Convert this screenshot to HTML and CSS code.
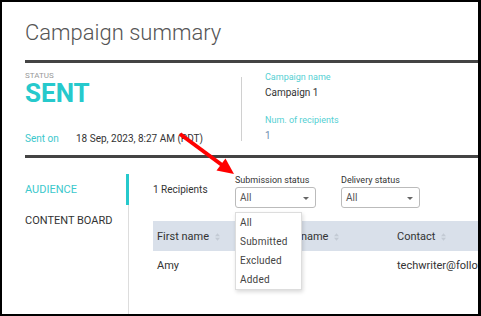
FILE: index.html
```html
<!DOCTYPE html>
<html lang="en">
<head>
  <meta charset="UTF-8" />
  <title>Campaign summary</title>
  <link rel="stylesheet" href="styles.css">
</head>
<body>
  <div class="frame">
    <h1 class="title">Campaign summary</h1>

    <div class="summary">
      <div class="status-col">
        <div class="tiny-label">STATUS</div>
        <div class="status">SENT</div>
        <div class="sent-on"><span class="sent-label">Sent on</span>18 Sep, 2023, 8:27 AM (PDT)</div>
      </div>
      <div class="divider"></div>
      <div class="info-col">
        <div class="info-label">Campaign name</div>
        <div class="info-value">Campaign 1</div>
        <div class="info-label gap">Num. of recipients</div>
        <div class="info-value num">1</div>
      </div>
    </div>

    <div class="body">
      <div class="nav">
        <a class="nav-item active">AUDIENCE</a>
        <a class="nav-item">CONTENT BOARD</a>
      </div>

      <div class="main">
        <div class="toolbar">
          <div class="count">1 Recipients</div>
          <div class="filter">
            <div class="filter-label">Submission status</div>
            <div class="select sub"><span>All</span><i class="caret"></i></div>
            <ul class="menu">
              <li>All</li>
              <li>Submitted</li>
              <li>Excluded</li>
              <li>Added</li>
            </ul>
          </div>
          <div class="filter">
            <div class="filter-label">Delivery status</div>
            <div class="select del"><span>All</span><i class="caret"></i></div>
          </div>
        </div>

        <table class="grid">
          <thead>
            <tr>
              <th class="c1">First name <svg class="sort" viewBox="0 0 6 9"><path d="M3 0L6 3.5H0Z M3 9L6 5.5H0Z"/></svg></th>
              <th class="c2">Last name <svg class="sort" viewBox="0 0 6 9"><path d="M3 0L6 3.5H0Z M3 9L6 5.5H0Z"/></svg></th>
              <th class="c3">Contact <svg class="sort" viewBox="0 0 6 9"><path d="M3 0L6 3.5H0Z M3 9L6 5.5H0Z"/></svg></th>
            </tr>
          </thead>
          <tbody>
            <tr>
              <td>Amy</td>
              <td></td>
              <td>techwriter@followup.com</td>
            </tr>
          </tbody>
        </table>
      </div>
    </div>

    <!-- callout arrow -->
    <svg class="arrow" width="481" height="316" viewBox="0 0 481 316">
      <line x1="180" y1="134" x2="222" y2="165" stroke="#f00" stroke-width="4"/>
      <polygon points="234,174 216.5,170.5 225.5,158.5" fill="#f00"/>
    </svg>
  </div>
</body>
</html>
```

FILE: styles.css
```css
* {
  box-sizing: border-box;
}
body {
  margin: 0;
  font-family: Roboto, "Liberation Sans", sans-serif;
  color: #333;
  background: #fff;
}
.frame {
  position: relative;
  width: 481px;
  height: 316px;
  border: 2px solid #000;
  border-right-width: 3px;
  padding-left: 23px;
  overflow: hidden;
}
.title {
  margin: 0 0 13px;
  padding-top: 17px;
  font-size: 22px;
  line-height: 28px;
  font-weight: 300;
  color: #555;
  white-space: nowrap;
}
.summary {
  display: flex;
  height: 98px;
  border-top: 3px solid #444;
  border-bottom: 3px solid #444;
}
.status-col {
  width: 216px;
  flex-shrink: 0;
  padding-top: 8px;
}
.tiny-label {
  font-size: 8px;
  line-height: 9px;
  color: #999;
}
.status {
  font-size: 26px;
  line-height: 26px;
  font-weight: 700;
  color: #26c9cc;
}
.sent-on {
  margin-top: 26px;
  font-size: 10px;
  line-height: 14px;
  white-space: nowrap;
}
.sent-label {
  display: inline-block;
  width: 51px;
  color: #3cc8cc;
}
.divider {
  width: 1px;
  height: 64px;
  margin-top: 14px;
  background: #d0d0d0;
}
.info-col {
  padding: 7px 0 0 23px;
}
.info-label {
  font-size: 9px;
  line-height: 14px;
  color: #55d0d3;
}
.info-label.gap {
  margin-top: 13px;
}
.info-value {
  margin-top: 2px;
  font-size: 10px;
  line-height: 14px;
}
.info-value.num {
  color: #6f8db0;
}
.body {
  display: flex;
  height: 160px;
}
.nav {
  width: 104px;
  flex-shrink: 0;
  margin-top: 16px;
  border-right: 1px solid #ddd;
}
.nav-item {
  display: block;
  height: 31px;
  line-height: 31px;
  font-size: 11px;
  color: #333;
  white-space: nowrap;
}
.nav-item.active {
  color: #3cc8cc;
  border-right: 3px solid #26c9cc;
  margin-right: -1px;
}
.main {
  flex: 1;
  min-width: 0;
  padding: 16px 0 0 24px;
}
.toolbar {
  display: flex;
  align-items: flex-start;
}
.count {
  width: 82px;
  flex-shrink: 0;
  padding-top: 9px;
  font-size: 10px;
  line-height: 14px;
}
.filter {
  position: relative;
  flex-shrink: 0;
  margin-right: 25px;
}
.filter-label {
  font-size: 9px;
  line-height: 12px;
  color: #333;
}
.select {
  display: flex;
  align-items: center;
  justify-content: space-between;
  height: 21px;
  margin-top: 1px;
  padding: 0 6px 0 4px;
  border: 1px solid #bbb;
  border-radius: 3px;
  font-size: 10px;
  color: #555;
}
.select.sub {
  width: 81px;
}
.select.del {
  width: 79px;
}
.caret {
  width: 0;
  height: 0;
  border-left: 3px solid transparent;
  border-right: 3px solid transparent;
  border-top: 3px solid #666;
  margin-top: 2px;
}
.menu {
  position: absolute;
  top: 38px;
  left: 0;
  z-index: 5;
  width: 67px;
  margin: 0;
  padding: 0;
  list-style: none;
  background: #fff;
  border: 1px solid #ddd;
  box-shadow: 1px 2px 4px rgba(0, 0, 0, 0.15);
}
.menu li {
  height: 19px;
  line-height: 19px;
  padding-left: 4px;
  font-size: 10px;
  color: #444;
  letter-spacing: 0.2px;
}
.grid {
  margin-top: 13px;
  border-collapse: collapse;
  width: 340px;
  table-layout: fixed;
}
.grid th {
  height: 30px;
  padding: 0 0 0 4px;
  background: #d9e0ea;
  text-align: left;
  font-size: 11px;
  font-weight: 400;
  color: #333;
  white-space: nowrap;
}
.grid .c1 {
  width: 120px;
}
.grid .c2 {
  width: 120px;
}
.grid td {
  height: 29px;
  padding: 0 0 0 4px;
  font-size: 11px;
  white-space: nowrap;
}
.sort {
  width: 5px;
  height: 8px;
  margin-left: 3px;
  vertical-align: -1px;
  fill: #c3cad4;
}
.arrow {
  position: absolute;
  top: -2px;
  left: -2px;
  z-index: 10;
  pointer-events: none;
}
```
